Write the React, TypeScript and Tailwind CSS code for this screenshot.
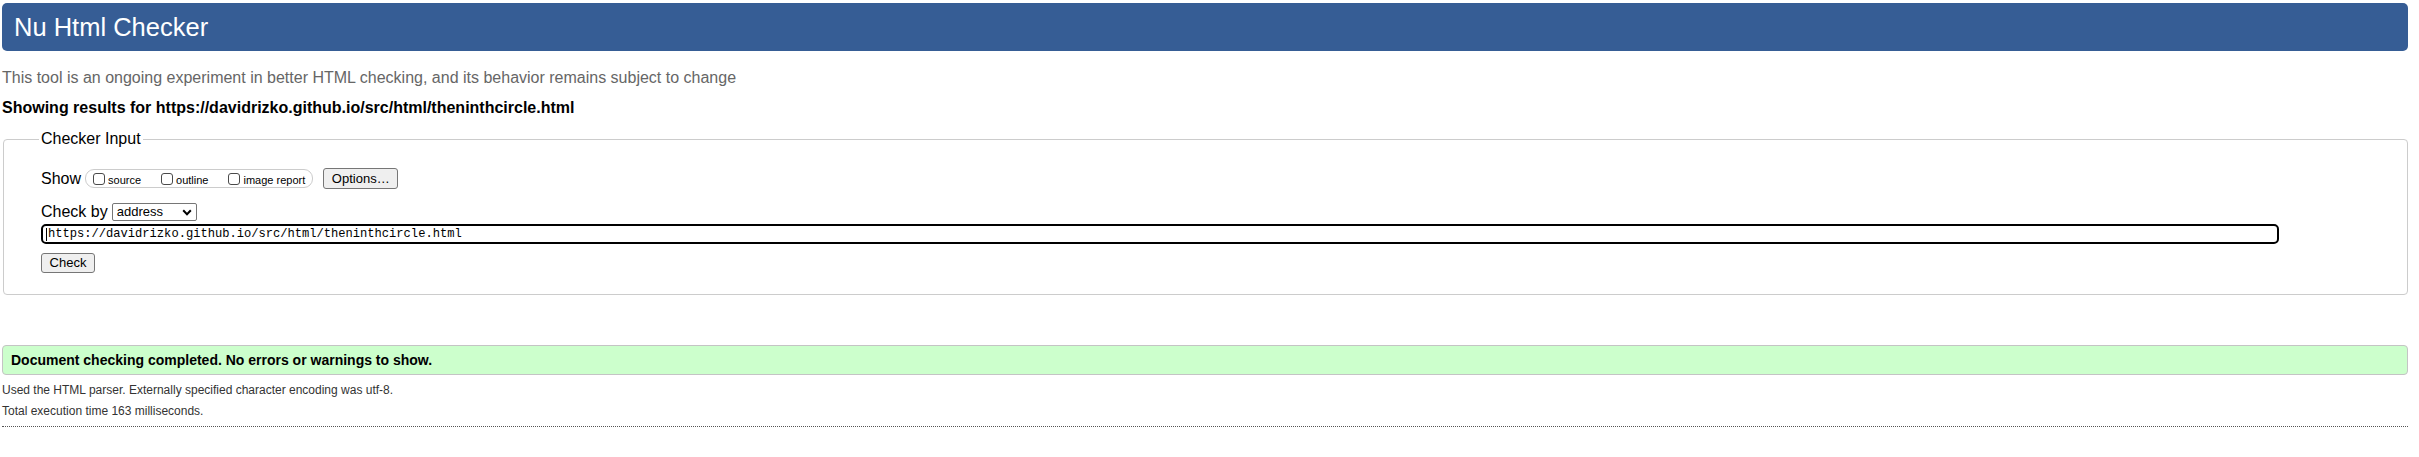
import React from 'react';

const Box: React.FC<{ label: string; last?: boolean }> = ({ label, last }) => (
  <span className={`flex items-center ${last ? '' : 'mr-[20px]'}`}>
    <span className="w-[12px] h-[12px] border border-[#4a4a4a] rounded-[3px] bg-white"></span>
    <span className="ml-[3px] text-[11px] leading-[14px] pt-[2px] text-black">{label}</span>
  </span>
);

export default function App() {
  return (
    <div className="w-full min-h-[457px] bg-white text-black pl-[2px] pr-[11px] pt-[3px] font-['Liberation_Sans',Arial,sans-serif]">
      <header className="h-[48px] rounded-[5px] bg-[#365d95] flex items-center pl-[12px] text-white text-[25.5px]">
        Nu Html Checker
      </header>

      <p className="mt-[17px] leading-[20px] text-[16px] text-[#666]">
        This tool is an ongoing experiment in better HTML checking, and its behavior remains subject to change
      </p>
      <p className="mt-[10px] leading-[20px] text-[16px] font-bold">
        Showing results for https://davidrizko.github.io/src/html/theninthcircle.html
      </p>

      <fieldset className="mt-[11px] ml-[1px] border border-[#ccc] rounded-[4px] pl-[37px] pt-[19px] pb-[21px]">
        <legend className="-ml-[2px] px-[2px] text-[16px] leading-[20px]">Checker Input</legend>

        <div className="flex items-center h-[21px]">
          <span className="text-[16px] leading-[20px] mr-[4px]">Show</span>
          <span className="flex items-center h-[19px] border border-[#ccc] rounded-[9px] pl-[7px] pr-[7px]">
            <Box label="source" />
            <Box label="outline" />
            <Box label="image report" last />
          </span>
          <span className="ml-[10px] h-[21px] w-[75px] flex items-center justify-center bg-[#efefef] border border-[#767676] rounded-[3px] text-[13px]">
            Options…
          </span>
        </div>

        <div className="flex items-center h-[18px] mt-[14px]">
          <span className="text-[16px] leading-[20px] mr-[4px]">Check by</span>
          <span className="h-[18px] w-[85px] flex items-center justify-between border border-[#767676] rounded-[2px] pl-[4px] pr-[4px] text-[13px]">
            address
            <svg width="10" height="7" viewBox="0 0 10 7" fill="none">
              <path d="M1.2 1.3 L5 5.2 L8.8 1.3" stroke="#000" strokeWidth="2" />
            </svg>
          </span>
        </div>

        <div className="mt-[3px] h-[20px] w-[2238px] border-2 border-black rounded-[5px] flex items-center pl-[3px] font-['Liberation_Mono',monospace] text-[12.1px]">
          <span className="w-px h-[13px] bg-black mr-[1px]"></span>
          https://davidrizko.github.io/src/html/theninthcircle.html
        </div>

        <div className="mt-[9px] h-[20px] w-[54px] flex items-center justify-center bg-[#efefef] border border-[#767676] rounded-[3px] text-[13px]">
          Check
        </div>
      </fieldset>

      <div className="mt-[50px] h-[30px] flex items-center pl-[8px] bg-[#ccffcc] border border-[#c4c4c4] rounded-[4px] text-[14px] font-bold">
        Document checking completed. No errors or warnings to show.
      </div>

      <p className="mt-[6px] leading-[18px] text-[12px] text-[#333]">
        Used the HTML parser. Externally specified character encoding was utf-8.
      </p>
      <p className="mt-[3px] leading-[18px] text-[12px] text-[#333]">Total execution time 163 milliseconds.</p>

      <div className="mt-[6px] border-t border-dotted border-[#555]"></div>
    </div>
  );
}
